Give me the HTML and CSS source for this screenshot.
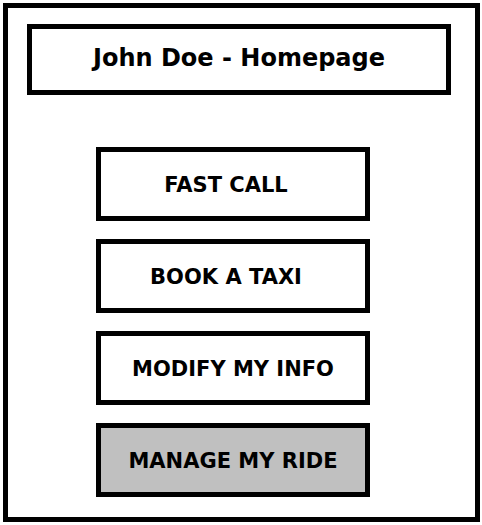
FILE: index.html
```html
<!DOCTYPE html>
<html>
<head>
  <title>John Doe - Homepage</title>
  <meta charset="utf-8">
  <link rel="stylesheet" href="styles.css">
</head>
<body>
<div class="frame">
  <div class="header">John Doe - Homepage</div>

  <div class="menu">
    <button class="menu-btn short">FAST CALL</button>
    <button class="menu-btn short">BOOK A TAXI</button>
    <button class="menu-btn">MODIFY MY INFO</button>
    <button class="menu-btn active">MANAGE MY RIDE</button>
  </div>
</div>
</body>
</html>
```

FILE: styles.css
```css
* {
  box-sizing: border-box;
}

body {
  margin: 0;
  font-family: "DejaVu Sans", sans-serif;
  background: #fff;
}

.frame {
  margin: 3px;
  width: 477px;
  height: 519px;
  border: 5px solid #000;
  padding: 16px 0 0 19px;
}

.header {
  width: 424px;
  height: 71px;
  border: 5px solid #000;
  display: flex;
  align-items: center;
  justify-content: center;
  padding-bottom: 4px;
  font-size: 24px;
  font-weight: bold;
}

.menu {
  display: flex;
  flex-direction: column;
  gap: 18px;
  margin: 52px 0 0 69px;
}

.menu-btn {
  width: 274px;
  height: 74px;
  border: 5px solid #000;
  background: #fff;
  font-family: "DejaVu Sans", sans-serif;
  font-size: 21px;
  font-weight: bold;
  color: #000;
  padding: 2px 0 0;
}

.menu-btn.short {
  padding-right: 14px;
}

.menu-btn.active {
  background: #c0c0c0;
}
```
